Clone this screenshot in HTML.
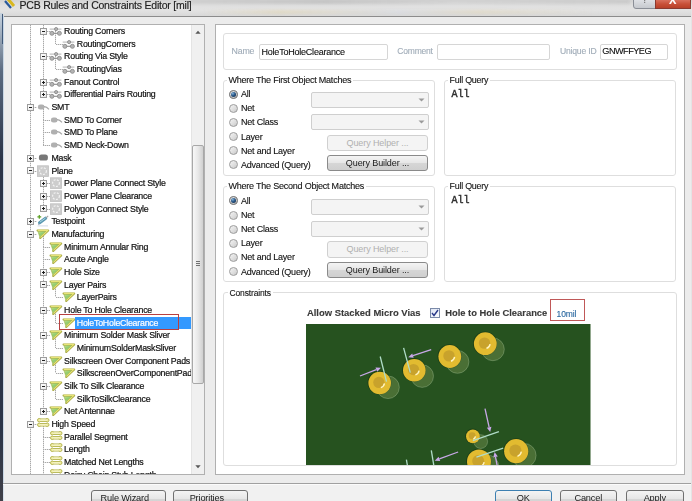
<!DOCTYPE html><html><head><meta charset="utf-8"><style>
*{margin:0;padding:0;box-sizing:border-box}
html,body{width:692px;height:501px;overflow:hidden;background:#ececec}
body{position:relative;font-family:"Liberation Sans",sans-serif;color:#1e1e1e}
#w{position:absolute;left:0;top:0;width:692px;height:501px;filter:blur(0.6px)}
.ab{position:absolute}
.t{position:absolute;white-space:nowrap;line-height:12px;height:12px;-webkit-text-stroke:0.12px currentColor}
.tr{position:absolute;white-space:nowrap;letter-spacing:-0.22px;-webkit-text-stroke:0.2px currentColor;font-size:8.8px;line-height:12px;height:12px;color:#202020}
.gb{position:absolute;border:1px solid #dedede;border-radius:3px}
.gl{position:absolute;background:#fff;padding:0 2px 0 2px;white-space:nowrap;line-height:12px;font-size:9px;letter-spacing:-0.22px;color:#151515;-webkit-text-stroke:0.12px currentColor}
.rad{position:absolute;width:9px;height:9px;border-radius:50%;border:1px solid #9c9c9c;background:linear-gradient(135deg,#f4f4f4 0,#dcdcdc 60%,#c8c8c8 100%)}
.inp{position:absolute;background:#fff;border:1px solid #d6d6d6;border-radius:2px}
.dd{position:absolute;background:#f4f4f4;border:1px solid #cfcfcf;border-radius:2px}
.btn{position:absolute;border:1px solid #8a8a8a;border-radius:3px;background:linear-gradient(#f4f4f4,#e6e6e6 50%,#d6d6d6 51%,#cfcfcf);text-align:center;font-size:9px;letter-spacing:-0.2px;line-height:14px;color:#1a1a1a}
</style></head><body><div id="w">
<svg width="0" height="0" style="position:absolute"><defs><linearGradient id="mg" x1="0" y1="0" x2="0.5" y2="1"><stop offset="0" stop-color="#d8e890"/><stop offset="0.5" stop-color="#90cc70"/><stop offset="1" stop-color="#c0dc80"/></linearGradient></defs></svg>
<div class="ab" style="left:0;top:0;width:692px;height:16px;background:linear-gradient(#d4d4d4,#e0e0e0 35%,#e2e2e2 65%,#d8d8d8)"></div>
<div class="ab" style="left:190px;top:0;width:440px;height:4px;background:linear-gradient(90deg,rgba(150,150,150,.15),rgba(120,120,120,.22) 30%,rgba(160,160,160,.1) 60%,rgba(140,140,140,.18));filter:blur(1.5px)"></div>
<div class="ab" style="left:200px;top:10px;width:400px;height:4px;background:linear-gradient(90deg,rgba(230,200,120,.0),rgba(230,200,120,.25) 20%,rgba(200,210,230,.2) 50%,rgba(230,200,120,.2) 70%,rgba(200,200,220,0));filter:blur(1.5px)"></div>
<div class="ab" style="left:0;top:16px;width:692px;height:1px;background:#8c8c8c"></div>
<svg class="ab" style="left:3px;top:0" width="13" height="10" viewBox="0 0 13 10"><path d="M2 1 L8 8" stroke="#2a5a9a" stroke-width="2.2"/><path d="M5 -1 L11 6" stroke="#d8b820" stroke-width="3"/></svg>
<div class="t" style="left:19.5px;top:-1px;font-size:10.5px;letter-spacing:-0.22px;color:#202020;-webkit-text-stroke:0.15px #202020">PCB Rules and Constraints Editor [mil]</div>
<div class="ab" style="left:633px;top:-3px;width:23px;height:11.5px;border:1px solid #8a8e96;border-radius:0 0 0 3px;background:linear-gradient(#e4e6ea,#c6c9ce)"></div>
<div class="ab" style="left:655px;top:-3px;width:36px;height:11.5px;border:1px solid #8a3a30;background:linear-gradient(#e08070,#c85038 60%,#b84028)"></div>
<div class="t" style="left:642px;top:-6px;font-size:10px;color:#777">?</div>
<div class="t" style="left:669px;top:-6px;font-size:11px;color:#fff;font-weight:bold">X</div>
<div class="ab" style="left:0;top:13px;width:3px;height:488px;background:linear-gradient(#c8d4e0,#5a6a80 12%,#2a3448 30%,#2a3448 85%,#404048)"></div>
<div class="ab" style="left:2px;top:14px;width:1px;height:30px;background:#405878"></div>
<div class="ab" style="left:3px;top:16px;width:1px;height:485px;background:#c8d6e4"></div>
<div class="ab" style="left:691px;top:8px;width:1px;height:493px;background:#e4e4e4"></div>
<div class="ab" style="left:11px;top:24px;width:194px;height:451px;border:1px solid #b0b0b0;background:#fff;overflow:hidden">
<div class="ab" style="left:18.0px;top:0.0px;width:1px;height:449.0px;background:repeating-linear-gradient(#a8a8a8 0 1px,#e0e0e0 1px 2px)"></div>
<div class="ab" style="left:62.5px;top:291.6px;width:117.5px;height:12px;background:#3399ff"></div>
<div class="ab" style="left:30.6px;top:0.0px;width:1px;height:6.0px;background:repeating-linear-gradient(#a8a8a8 0 1px,#e0e0e0 1px 2px)"></div>
<div class="ab" style="left:43.2px;top:6.0px;width:1px;height:12.7px;background:repeating-linear-gradient(#a8a8a8 0 1px,#e0e0e0 1px 2px)"></div>
<div class="ab" style="left:30.6px;top:6.0px;width:1px;height:25.4px;background:repeating-linear-gradient(#a8a8a8 0 1px,#e0e0e0 1px 2px)"></div>
<div class="ab" style="left:43.2px;top:31.4px;width:1px;height:12.7px;background:repeating-linear-gradient(#a8a8a8 0 1px,#e0e0e0 1px 2px)"></div>
<div class="ab" style="left:30.6px;top:31.4px;width:1px;height:25.4px;background:repeating-linear-gradient(#a8a8a8 0 1px,#e0e0e0 1px 2px)"></div>
<div class="ab" style="left:30.6px;top:56.7px;width:1px;height:12.7px;background:repeating-linear-gradient(#a8a8a8 0 1px,#e0e0e0 1px 2px)"></div>
<div class="ab" style="left:30.6px;top:82.1px;width:1px;height:12.7px;background:repeating-linear-gradient(#a8a8a8 0 1px,#e0e0e0 1px 2px)"></div>
<div class="ab" style="left:30.6px;top:94.8px;width:1px;height:12.7px;background:repeating-linear-gradient(#a8a8a8 0 1px,#e0e0e0 1px 2px)"></div>
<div class="ab" style="left:30.6px;top:107.4px;width:1px;height:12.7px;background:repeating-linear-gradient(#a8a8a8 0 1px,#e0e0e0 1px 2px)"></div>
<div class="ab" style="left:30.6px;top:145.5px;width:1px;height:12.7px;background:repeating-linear-gradient(#a8a8a8 0 1px,#e0e0e0 1px 2px)"></div>
<div class="ab" style="left:30.6px;top:158.2px;width:1px;height:12.7px;background:repeating-linear-gradient(#a8a8a8 0 1px,#e0e0e0 1px 2px)"></div>
<div class="ab" style="left:30.6px;top:170.8px;width:1px;height:12.7px;background:repeating-linear-gradient(#a8a8a8 0 1px,#e0e0e0 1px 2px)"></div>
<div class="ab" style="left:30.6px;top:208.9px;width:1px;height:12.7px;background:repeating-linear-gradient(#a8a8a8 0 1px,#e0e0e0 1px 2px)"></div>
<div class="ab" style="left:30.6px;top:221.6px;width:1px;height:12.7px;background:repeating-linear-gradient(#a8a8a8 0 1px,#e0e0e0 1px 2px)"></div>
<div class="ab" style="left:30.6px;top:234.2px;width:1px;height:12.7px;background:repeating-linear-gradient(#a8a8a8 0 1px,#e0e0e0 1px 2px)"></div>
<div class="ab" style="left:30.6px;top:246.9px;width:1px;height:12.7px;background:repeating-linear-gradient(#a8a8a8 0 1px,#e0e0e0 1px 2px)"></div>
<div class="ab" style="left:43.2px;top:259.6px;width:1px;height:12.7px;background:repeating-linear-gradient(#a8a8a8 0 1px,#e0e0e0 1px 2px)"></div>
<div class="ab" style="left:30.6px;top:259.6px;width:1px;height:25.4px;background:repeating-linear-gradient(#a8a8a8 0 1px,#e0e0e0 1px 2px)"></div>
<div class="ab" style="left:43.2px;top:285.0px;width:1px;height:12.7px;background:repeating-linear-gradient(#a8a8a8 0 1px,#e0e0e0 1px 2px)"></div>
<div class="ab" style="left:30.6px;top:285.0px;width:1px;height:25.4px;background:repeating-linear-gradient(#a8a8a8 0 1px,#e0e0e0 1px 2px)"></div>
<div class="ab" style="left:43.2px;top:310.3px;width:1px;height:12.7px;background:repeating-linear-gradient(#a8a8a8 0 1px,#e0e0e0 1px 2px)"></div>
<div class="ab" style="left:30.6px;top:310.3px;width:1px;height:25.4px;background:repeating-linear-gradient(#a8a8a8 0 1px,#e0e0e0 1px 2px)"></div>
<div class="ab" style="left:43.2px;top:335.7px;width:1px;height:12.7px;background:repeating-linear-gradient(#a8a8a8 0 1px,#e0e0e0 1px 2px)"></div>
<div class="ab" style="left:30.6px;top:335.7px;width:1px;height:25.4px;background:repeating-linear-gradient(#a8a8a8 0 1px,#e0e0e0 1px 2px)"></div>
<div class="ab" style="left:43.2px;top:361.0px;width:1px;height:12.7px;background:repeating-linear-gradient(#a8a8a8 0 1px,#e0e0e0 1px 2px)"></div>
<div class="ab" style="left:30.6px;top:361.0px;width:1px;height:25.4px;background:repeating-linear-gradient(#a8a8a8 0 1px,#e0e0e0 1px 2px)"></div>
<div class="ab" style="left:30.6px;top:399.1px;width:1px;height:12.7px;background:repeating-linear-gradient(#a8a8a8 0 1px,#e0e0e0 1px 2px)"></div>
<div class="ab" style="left:30.6px;top:411.8px;width:1px;height:12.7px;background:repeating-linear-gradient(#a8a8a8 0 1px,#e0e0e0 1px 2px)"></div>
<div class="ab" style="left:30.6px;top:424.4px;width:1px;height:12.7px;background:repeating-linear-gradient(#a8a8a8 0 1px,#e0e0e0 1px 2px)"></div>
<div class="ab" style="left:30.6px;top:437.1px;width:1px;height:12.7px;background:repeating-linear-gradient(#a8a8a8 0 1px,#e0e0e0 1px 2px)"></div>
<div class="ab" style="left:30.6px;top:449.8px;width:1px;height:-0.8px;background:repeating-linear-gradient(#a8a8a8 0 1px,#e0e0e0 1px 2px)"></div>
<div class="ab" style="left:31.1px;top:6.0px;width:7.0px;height:1px;background:repeating-linear-gradient(90deg,#a8a8a8 0 1px,#e0e0e0 1px 2px)"></div>
<div class="ab" style="left:28px;top:3px;width:7px;height:7px;border:1px solid #9c9c9c;background:linear-gradient(135deg,#fff,#e8e8e8)"></div>
<div class="ab" style="left:30px;top:6px;width:3px;height:1px;background:#202020"></div>
<div class="ab" style="left:38.1px;top:0.0px"><svg style="position:absolute;left:0.0px;top:0.0px;overflow:visible" width="13" height="12" viewBox="0 0 13 12"><g stroke="#8c8c8c" stroke-width="0.9" fill="#b4b4b4"><line x1="-0.3" y1="4.1" x2="11.4" y2="4.1" stroke="#a8a8a8"/><line x1="1.9" y1="8.3" x2="9.4" y2="8.3" stroke-width="1.1"/><circle cx="6.1" cy="4.1" r="1.6"/><circle cx="1.9" cy="8.3" r="2"/><circle cx="9.4" cy="8.3" r="2"/></g></svg></div>
<div class="tr" style="left:52.1px;top:0.0px;color:#111">Routing Corners</div>
<div class="ab" style="left:43.7px;top:18.7px;width:7.1px;height:1px;background:repeating-linear-gradient(90deg,#a8a8a8 0 1px,#e0e0e0 1px 2px)"></div>
<div class="ab" style="left:50.8px;top:12.7px"><svg style="position:absolute;left:0.0px;top:0.0px;overflow:visible" width="13" height="12" viewBox="0 0 13 12"><g stroke="#8c8c8c" stroke-width="0.9" fill="#b4b4b4"><line x1="-0.3" y1="4.1" x2="11.4" y2="4.1" stroke="#a8a8a8"/><line x1="1.9" y1="8.3" x2="9.4" y2="8.3" stroke-width="1.1"/><circle cx="6.1" cy="4.1" r="1.6"/><circle cx="1.9" cy="8.3" r="2"/><circle cx="9.4" cy="8.3" r="2"/></g></svg></div>
<div class="tr" style="left:64.8px;top:12.7px;color:#111">RoutingCorners</div>
<div class="ab" style="left:31.1px;top:31.4px;width:7.0px;height:1px;background:repeating-linear-gradient(90deg,#a8a8a8 0 1px,#e0e0e0 1px 2px)"></div>
<div class="ab" style="left:28px;top:28px;width:7px;height:7px;border:1px solid #9c9c9c;background:linear-gradient(135deg,#fff,#e8e8e8)"></div>
<div class="ab" style="left:30px;top:31px;width:3px;height:1px;background:#202020"></div>
<div class="ab" style="left:38.1px;top:25.4px"><svg style="position:absolute;left:0.0px;top:0.0px;overflow:visible" width="13" height="12" viewBox="0 0 13 12"><g stroke="#8c8c8c" stroke-width="0.9" fill="#b4b4b4"><line x1="-0.3" y1="4.1" x2="11.4" y2="4.1" stroke="#a8a8a8"/><line x1="1.9" y1="8.3" x2="9.4" y2="8.3" stroke-width="1.1"/><circle cx="6.1" cy="4.1" r="1.6"/><circle cx="1.9" cy="8.3" r="2"/><circle cx="9.4" cy="8.3" r="2"/></g></svg></div>
<div class="tr" style="left:52.1px;top:25.4px;color:#111">Routing Via Style</div>
<div class="ab" style="left:43.7px;top:44.0px;width:7.1px;height:1px;background:repeating-linear-gradient(90deg,#a8a8a8 0 1px,#e0e0e0 1px 2px)"></div>
<div class="ab" style="left:50.8px;top:38.0px"><svg style="position:absolute;left:0.0px;top:0.0px;overflow:visible" width="13" height="12" viewBox="0 0 13 12"><g stroke="#8c8c8c" stroke-width="0.9" fill="#b4b4b4"><line x1="-0.3" y1="4.1" x2="11.4" y2="4.1" stroke="#a8a8a8"/><line x1="1.9" y1="8.3" x2="9.4" y2="8.3" stroke-width="1.1"/><circle cx="6.1" cy="4.1" r="1.6"/><circle cx="1.9" cy="8.3" r="2"/><circle cx="9.4" cy="8.3" r="2"/></g></svg></div>
<div class="tr" style="left:64.8px;top:38.0px;color:#111">RoutingVias</div>
<div class="ab" style="left:31.1px;top:56.7px;width:7.0px;height:1px;background:repeating-linear-gradient(90deg,#a8a8a8 0 1px,#e0e0e0 1px 2px)"></div>
<div class="ab" style="left:28px;top:54px;width:7px;height:7px;border:1px solid #9c9c9c;background:linear-gradient(135deg,#fff,#e8e8e8)"></div>
<div class="ab" style="left:30px;top:57px;width:3px;height:1px;background:#202020"></div>
<div class="ab" style="left:31px;top:56px;width:1px;height:3px;background:#202020"></div>
<div class="ab" style="left:38.1px;top:50.7px"><svg style="position:absolute;left:0.0px;top:0.0px;overflow:visible" width="13" height="12" viewBox="0 0 13 12"><g stroke="#8c8c8c" stroke-width="0.9" fill="#b4b4b4"><line x1="-0.3" y1="4.1" x2="11.4" y2="4.1" stroke="#a8a8a8"/><line x1="1.9" y1="8.3" x2="9.4" y2="8.3" stroke-width="1.1"/><circle cx="6.1" cy="4.1" r="1.6"/><circle cx="1.9" cy="8.3" r="2"/><circle cx="9.4" cy="8.3" r="2"/></g></svg></div>
<div class="tr" style="left:52.1px;top:50.7px;color:#111">Fanout Control</div>
<div class="ab" style="left:31.1px;top:69.4px;width:7.0px;height:1px;background:repeating-linear-gradient(90deg,#a8a8a8 0 1px,#e0e0e0 1px 2px)"></div>
<div class="ab" style="left:28px;top:66px;width:7px;height:7px;border:1px solid #9c9c9c;background:linear-gradient(135deg,#fff,#e8e8e8)"></div>
<div class="ab" style="left:30px;top:69px;width:3px;height:1px;background:#202020"></div>
<div class="ab" style="left:31px;top:68px;width:1px;height:3px;background:#202020"></div>
<div class="ab" style="left:38.1px;top:63.4px"><svg style="position:absolute;left:0.0px;top:0.0px;overflow:visible" width="13" height="12" viewBox="0 0 13 12"><g stroke="#8c8c8c" stroke-width="0.9" fill="#b4b4b4"><line x1="-0.3" y1="4.1" x2="11.4" y2="4.1" stroke="#a8a8a8"/><line x1="1.9" y1="8.3" x2="9.4" y2="8.3" stroke-width="1.1"/><circle cx="6.1" cy="4.1" r="1.6"/><circle cx="1.9" cy="8.3" r="2"/><circle cx="9.4" cy="8.3" r="2"/></g></svg></div>
<div class="tr" style="left:52.1px;top:63.4px;color:#111">Differential Pairs Routing</div>
<div class="ab" style="left:18.5px;top:82.1px;width:6.9px;height:1px;background:repeating-linear-gradient(90deg,#a8a8a8 0 1px,#e0e0e0 1px 2px)"></div>
<div class="ab" style="left:15px;top:79px;width:7px;height:7px;border:1px solid #9c9c9c;background:linear-gradient(135deg,#fff,#e8e8e8)"></div>
<div class="ab" style="left:17px;top:82px;width:3px;height:1px;background:#202020"></div>
<div class="ab" style="left:25.4px;top:76.1px"><svg style="position:absolute;left:0.0px;top:0.0px;overflow:visible" width="13" height="12" viewBox="0 0 13 12"><rect x="0.9" y="3.6" width="6.6" height="5" rx="2.4" fill="#b0b0b0"/><path d="M7 5.6 Q9.5 5.3 12 8.3" stroke="#a8a8a8" stroke-width="1.2" fill="none"/></svg></div>
<div class="tr" style="left:39.4px;top:76.1px;color:#111">SMT</div>
<div class="ab" style="left:31.1px;top:94.8px;width:7.0px;height:1px;background:repeating-linear-gradient(90deg,#a8a8a8 0 1px,#e0e0e0 1px 2px)"></div>
<div class="ab" style="left:38.1px;top:88.8px"><svg style="position:absolute;left:0.0px;top:0.0px;overflow:visible" width="13" height="12" viewBox="0 0 13 12"><rect x="0.9" y="3.6" width="6.6" height="5" rx="2.4" fill="#b0b0b0"/><path d="M7 5.6 Q9.5 5.3 12 8.3" stroke="#a8a8a8" stroke-width="1.2" fill="none"/></svg></div>
<div class="tr" style="left:52.1px;top:88.8px;color:#111">SMD To Corner</div>
<div class="ab" style="left:31.1px;top:107.4px;width:7.0px;height:1px;background:repeating-linear-gradient(90deg,#a8a8a8 0 1px,#e0e0e0 1px 2px)"></div>
<div class="ab" style="left:38.1px;top:101.4px"><svg style="position:absolute;left:0.0px;top:0.0px;overflow:visible" width="13" height="12" viewBox="0 0 13 12"><rect x="0.9" y="3.6" width="6.6" height="5" rx="2.4" fill="#b0b0b0"/><path d="M7 5.6 Q9.5 5.3 12 8.3" stroke="#a8a8a8" stroke-width="1.2" fill="none"/></svg></div>
<div class="tr" style="left:52.1px;top:101.4px;color:#111">SMD To Plane</div>
<div class="ab" style="left:31.1px;top:120.1px;width:7.0px;height:1px;background:repeating-linear-gradient(90deg,#a8a8a8 0 1px,#e0e0e0 1px 2px)"></div>
<div class="ab" style="left:38.1px;top:114.1px"><svg style="position:absolute;left:0.0px;top:0.0px;overflow:visible" width="13" height="12" viewBox="0 0 13 12"><rect x="0.9" y="3.6" width="6.6" height="5" rx="2.4" fill="#b0b0b0"/><path d="M7 5.6 Q9.5 5.3 12 8.3" stroke="#a8a8a8" stroke-width="1.2" fill="none"/></svg></div>
<div class="tr" style="left:52.1px;top:114.1px;color:#111">SMD Neck-Down</div>
<div class="ab" style="left:18.5px;top:132.8px;width:6.9px;height:1px;background:repeating-linear-gradient(90deg,#a8a8a8 0 1px,#e0e0e0 1px 2px)"></div>
<div class="ab" style="left:15px;top:130px;width:7px;height:7px;border:1px solid #9c9c9c;background:linear-gradient(135deg,#fff,#e8e8e8)"></div>
<div class="ab" style="left:17px;top:133px;width:3px;height:1px;background:#202020"></div>
<div class="ab" style="left:18px;top:132px;width:1px;height:3px;background:#202020"></div>
<div class="ab" style="left:25.4px;top:126.8px"><svg style="position:absolute;left:0.0px;top:0.0px;overflow:visible" width="13" height="12" viewBox="0 0 13 12"><rect x="1.9" y="2.6" width="9" height="6" rx="2.6" fill="#777777"/></svg></div>
<div class="tr" style="left:39.4px;top:126.8px;color:#111">Mask</div>
<div class="ab" style="left:18.5px;top:145.5px;width:6.9px;height:1px;background:repeating-linear-gradient(90deg,#a8a8a8 0 1px,#e0e0e0 1px 2px)"></div>
<div class="ab" style="left:15px;top:142px;width:7px;height:7px;border:1px solid #9c9c9c;background:linear-gradient(135deg,#fff,#e8e8e8)"></div>
<div class="ab" style="left:17px;top:145px;width:3px;height:1px;background:#202020"></div>
<div class="ab" style="left:25.4px;top:139.5px"><svg style="position:absolute;left:0.0px;top:0.0px;overflow:visible" width="13" height="12" viewBox="0 0 13 12"><rect x="0.5" y="0.8" width="11" height="10.6" fill="#cdcdcd" stroke="#c0c0c0" stroke-width="0.8"/><circle cx="6" cy="6.1" r="3.4" fill="none" stroke="#f2f2f2" stroke-width="1.2" stroke-dasharray="2 1.3"/></svg></div>
<div class="tr" style="left:39.4px;top:139.5px;color:#111">Plane</div>
<div class="ab" style="left:31.1px;top:158.2px;width:7.0px;height:1px;background:repeating-linear-gradient(90deg,#a8a8a8 0 1px,#e0e0e0 1px 2px)"></div>
<div class="ab" style="left:28px;top:155px;width:7px;height:7px;border:1px solid #9c9c9c;background:linear-gradient(135deg,#fff,#e8e8e8)"></div>
<div class="ab" style="left:30px;top:158px;width:3px;height:1px;background:#202020"></div>
<div class="ab" style="left:31px;top:157px;width:1px;height:3px;background:#202020"></div>
<div class="ab" style="left:38.1px;top:152.2px"><svg style="position:absolute;left:0.0px;top:0.0px;overflow:visible" width="13" height="12" viewBox="0 0 13 12"><rect x="0.5" y="0.8" width="11" height="10.6" fill="#cdcdcd" stroke="#c0c0c0" stroke-width="0.8"/><circle cx="6" cy="6.1" r="3.4" fill="none" stroke="#f2f2f2" stroke-width="1.2" stroke-dasharray="2 1.3"/></svg></div>
<div class="tr" style="left:52.1px;top:152.2px;color:#111">Power Plane Connect Style</div>
<div class="ab" style="left:31.1px;top:170.8px;width:7.0px;height:1px;background:repeating-linear-gradient(90deg,#a8a8a8 0 1px,#e0e0e0 1px 2px)"></div>
<div class="ab" style="left:28px;top:168px;width:7px;height:7px;border:1px solid #9c9c9c;background:linear-gradient(135deg,#fff,#e8e8e8)"></div>
<div class="ab" style="left:30px;top:171px;width:3px;height:1px;background:#202020"></div>
<div class="ab" style="left:31px;top:170px;width:1px;height:3px;background:#202020"></div>
<div class="ab" style="left:38.1px;top:164.8px"><svg style="position:absolute;left:0.0px;top:0.0px;overflow:visible" width="13" height="12" viewBox="0 0 13 12"><rect x="0.5" y="0.8" width="11" height="10.6" fill="#cdcdcd" stroke="#c0c0c0" stroke-width="0.8"/><circle cx="6" cy="6.1" r="3.4" fill="none" stroke="#f2f2f2" stroke-width="1.2" stroke-dasharray="2 1.3"/></svg></div>
<div class="tr" style="left:52.1px;top:164.8px;color:#111">Power Plane Clearance</div>
<div class="ab" style="left:31.1px;top:183.5px;width:7.0px;height:1px;background:repeating-linear-gradient(90deg,#a8a8a8 0 1px,#e0e0e0 1px 2px)"></div>
<div class="ab" style="left:28px;top:180px;width:7px;height:7px;border:1px solid #9c9c9c;background:linear-gradient(135deg,#fff,#e8e8e8)"></div>
<div class="ab" style="left:30px;top:183px;width:3px;height:1px;background:#202020"></div>
<div class="ab" style="left:31px;top:182px;width:1px;height:3px;background:#202020"></div>
<div class="ab" style="left:38.1px;top:177.5px"><svg style="position:absolute;left:0.0px;top:0.0px;overflow:visible" width="13" height="12" viewBox="0 0 13 12"><rect x="0.5" y="0.8" width="11" height="10.6" fill="#cdcdcd" stroke="#c0c0c0" stroke-width="0.8"/><circle cx="6" cy="6.1" r="3.4" fill="none" stroke="#f2f2f2" stroke-width="1.2" stroke-dasharray="2 1.3"/></svg></div>
<div class="tr" style="left:52.1px;top:177.5px;color:#111">Polygon Connect Style</div>
<div class="ab" style="left:18.5px;top:196.2px;width:6.9px;height:1px;background:repeating-linear-gradient(90deg,#a8a8a8 0 1px,#e0e0e0 1px 2px)"></div>
<div class="ab" style="left:15px;top:193px;width:7px;height:7px;border:1px solid #9c9c9c;background:linear-gradient(135deg,#fff,#e8e8e8)"></div>
<div class="ab" style="left:17px;top:196px;width:3px;height:1px;background:#202020"></div>
<div class="ab" style="left:18px;top:195px;width:1px;height:3px;background:#202020"></div>
<div class="ab" style="left:25.4px;top:190.2px"><svg style="position:absolute;left:0.0px;top:0.0px;overflow:visible" width="13" height="12" viewBox="0 0 13 12"><path d="M2.6 7.7 L8.6 3.3" stroke="#5a98b0" stroke-width="3.2" stroke-linecap="round"/><path d="M3.2 6.9 L8.2 3.3" stroke="#b0dcea" stroke-width="0.9" stroke-linecap="round"/><path d="M9.2 2.8 L11.2 0.9" stroke="#a0a0a0" stroke-width="1.1"/><path d="M0.4 1.9 H4.2 M2.3 0 V3.8" stroke="#5aa020" stroke-width="1.2"/><path d="M1.2 9.6 L2.4 8.6" stroke="#8088a8" stroke-width="0.8"/><path d="M0.6 10.9 H11" stroke="#c8d0e0" stroke-width="0.8"/></svg></div>
<div class="tr" style="left:39.4px;top:190.2px;color:#111">Testpoint</div>
<div class="ab" style="left:18.5px;top:208.9px;width:6.9px;height:1px;background:repeating-linear-gradient(90deg,#a8a8a8 0 1px,#e0e0e0 1px 2px)"></div>
<div class="ab" style="left:15px;top:206px;width:7px;height:7px;border:1px solid #9c9c9c;background:linear-gradient(135deg,#fff,#e8e8e8)"></div>
<div class="ab" style="left:17px;top:209px;width:3px;height:1px;background:#202020"></div>
<div class="ab" style="left:25.4px;top:202.9px"><svg style="position:absolute;left:0.0px;top:0.0px;overflow:visible" width="13" height="12" viewBox="0 0 13 12"><path d="M0.6 2.2 H11.4 L3.2 10.2 Z" fill="url(#mg)"/><path d="M0.5 2.4 H11.2 L3.2 10" fill="none" stroke="#a8a840" stroke-width="2" stroke-linejoin="round" stroke-linecap="round"/><path d="M0.7 2.4 H10.8 L3.3 9.6" fill="none" stroke="#e8e478" stroke-width="1.1" stroke-linejoin="round"/><path d="M0.7 2.6 L3.2 10" fill="none" stroke="#a0b850" stroke-width="0.7"/></svg></div>
<div class="tr" style="left:39.4px;top:202.9px;color:#111">Manufacturing</div>
<div class="ab" style="left:31.1px;top:221.6px;width:7.0px;height:1px;background:repeating-linear-gradient(90deg,#a8a8a8 0 1px,#e0e0e0 1px 2px)"></div>
<div class="ab" style="left:38.1px;top:215.6px"><svg style="position:absolute;left:0.0px;top:0.0px;overflow:visible" width="13" height="12" viewBox="0 0 13 12"><path d="M0.6 2.2 H11.4 L3.2 10.2 Z" fill="url(#mg)"/><path d="M0.5 2.4 H11.2 L3.2 10" fill="none" stroke="#a8a840" stroke-width="2" stroke-linejoin="round" stroke-linecap="round"/><path d="M0.7 2.4 H10.8 L3.3 9.6" fill="none" stroke="#e8e478" stroke-width="1.1" stroke-linejoin="round"/><path d="M0.7 2.6 L3.2 10" fill="none" stroke="#a0b850" stroke-width="0.7"/></svg></div>
<div class="tr" style="left:52.1px;top:215.6px;color:#111">Minimum Annular Ring</div>
<div class="ab" style="left:31.1px;top:234.2px;width:7.0px;height:1px;background:repeating-linear-gradient(90deg,#a8a8a8 0 1px,#e0e0e0 1px 2px)"></div>
<div class="ab" style="left:38.1px;top:228.2px"><svg style="position:absolute;left:0.0px;top:0.0px;overflow:visible" width="13" height="12" viewBox="0 0 13 12"><path d="M0.6 2.2 H11.4 L3.2 10.2 Z" fill="url(#mg)"/><path d="M0.5 2.4 H11.2 L3.2 10" fill="none" stroke="#a8a840" stroke-width="2" stroke-linejoin="round" stroke-linecap="round"/><path d="M0.7 2.4 H10.8 L3.3 9.6" fill="none" stroke="#e8e478" stroke-width="1.1" stroke-linejoin="round"/><path d="M0.7 2.6 L3.2 10" fill="none" stroke="#a0b850" stroke-width="0.7"/></svg></div>
<div class="tr" style="left:52.1px;top:228.2px;color:#111">Acute Angle</div>
<div class="ab" style="left:31.1px;top:246.9px;width:7.0px;height:1px;background:repeating-linear-gradient(90deg,#a8a8a8 0 1px,#e0e0e0 1px 2px)"></div>
<div class="ab" style="left:28px;top:244px;width:7px;height:7px;border:1px solid #9c9c9c;background:linear-gradient(135deg,#fff,#e8e8e8)"></div>
<div class="ab" style="left:30px;top:247px;width:3px;height:1px;background:#202020"></div>
<div class="ab" style="left:31px;top:246px;width:1px;height:3px;background:#202020"></div>
<div class="ab" style="left:38.1px;top:240.9px"><svg style="position:absolute;left:0.0px;top:0.0px;overflow:visible" width="13" height="12" viewBox="0 0 13 12"><path d="M0.6 2.2 H11.4 L3.2 10.2 Z" fill="url(#mg)"/><path d="M0.5 2.4 H11.2 L3.2 10" fill="none" stroke="#a8a840" stroke-width="2" stroke-linejoin="round" stroke-linecap="round"/><path d="M0.7 2.4 H10.8 L3.3 9.6" fill="none" stroke="#e8e478" stroke-width="1.1" stroke-linejoin="round"/><path d="M0.7 2.6 L3.2 10" fill="none" stroke="#a0b850" stroke-width="0.7"/></svg></div>
<div class="tr" style="left:52.1px;top:240.9px;color:#111">Hole Size</div>
<div class="ab" style="left:31.1px;top:259.6px;width:7.0px;height:1px;background:repeating-linear-gradient(90deg,#a8a8a8 0 1px,#e0e0e0 1px 2px)"></div>
<div class="ab" style="left:28px;top:256px;width:7px;height:7px;border:1px solid #9c9c9c;background:linear-gradient(135deg,#fff,#e8e8e8)"></div>
<div class="ab" style="left:30px;top:259px;width:3px;height:1px;background:#202020"></div>
<div class="ab" style="left:38.1px;top:253.6px"><svg style="position:absolute;left:0.0px;top:0.0px;overflow:visible" width="13" height="12" viewBox="0 0 13 12"><path d="M0.6 2.2 H11.4 L3.2 10.2 Z" fill="url(#mg)"/><path d="M0.5 2.4 H11.2 L3.2 10" fill="none" stroke="#a8a840" stroke-width="2" stroke-linejoin="round" stroke-linecap="round"/><path d="M0.7 2.4 H10.8 L3.3 9.6" fill="none" stroke="#e8e478" stroke-width="1.1" stroke-linejoin="round"/><path d="M0.7 2.6 L3.2 10" fill="none" stroke="#a0b850" stroke-width="0.7"/></svg></div>
<div class="tr" style="left:52.1px;top:253.6px;color:#111">Layer Pairs</div>
<div class="ab" style="left:43.7px;top:272.3px;width:7.1px;height:1px;background:repeating-linear-gradient(90deg,#a8a8a8 0 1px,#e0e0e0 1px 2px)"></div>
<div class="ab" style="left:50.8px;top:266.3px"><svg style="position:absolute;left:0.0px;top:0.0px;overflow:visible" width="13" height="12" viewBox="0 0 13 12"><path d="M0.6 2.2 H11.4 L3.2 10.2 Z" fill="url(#mg)"/><path d="M0.5 2.4 H11.2 L3.2 10" fill="none" stroke="#a8a840" stroke-width="2" stroke-linejoin="round" stroke-linecap="round"/><path d="M0.7 2.4 H10.8 L3.3 9.6" fill="none" stroke="#e8e478" stroke-width="1.1" stroke-linejoin="round"/><path d="M0.7 2.6 L3.2 10" fill="none" stroke="#a0b850" stroke-width="0.7"/></svg></div>
<div class="tr" style="left:64.8px;top:266.3px;color:#111">LayerPairs</div>
<div class="ab" style="left:31.1px;top:285.0px;width:7.0px;height:1px;background:repeating-linear-gradient(90deg,#a8a8a8 0 1px,#e0e0e0 1px 2px)"></div>
<div class="ab" style="left:28px;top:282px;width:7px;height:7px;border:1px solid #9c9c9c;background:linear-gradient(135deg,#fff,#e8e8e8)"></div>
<div class="ab" style="left:30px;top:285px;width:3px;height:1px;background:#202020"></div>
<div class="ab" style="left:38.1px;top:279.0px"><svg style="position:absolute;left:0.0px;top:0.0px;overflow:visible" width="13" height="12" viewBox="0 0 13 12"><path d="M0.6 2.2 H11.4 L3.2 10.2 Z" fill="url(#mg)"/><path d="M0.5 2.4 H11.2 L3.2 10" fill="none" stroke="#a8a840" stroke-width="2" stroke-linejoin="round" stroke-linecap="round"/><path d="M0.7 2.4 H10.8 L3.3 9.6" fill="none" stroke="#e8e478" stroke-width="1.1" stroke-linejoin="round"/><path d="M0.7 2.6 L3.2 10" fill="none" stroke="#a0b850" stroke-width="0.7"/></svg></div>
<div class="tr" style="left:52.1px;top:279.0px;color:#111">Hole To Hole Clearance</div>
<div class="ab" style="left:43.7px;top:297.6px;width:7.1px;height:1px;background:repeating-linear-gradient(90deg,#a8a8a8 0 1px,#e0e0e0 1px 2px)"></div>
<div class="ab" style="left:50.8px;top:291.6px"><svg style="position:absolute;left:0.0px;top:0.0px;overflow:visible" width="13" height="12" viewBox="0 0 13 12"><path d="M0.6 2.2 H11.4 L3.2 10.2 Z" fill="url(#mg)"/><path d="M0.5 2.4 H11.2 L3.2 10" fill="none" stroke="#a8a840" stroke-width="2" stroke-linejoin="round" stroke-linecap="round"/><path d="M0.7 2.4 H10.8 L3.3 9.6" fill="none" stroke="#e8e478" stroke-width="1.1" stroke-linejoin="round"/><path d="M0.7 2.6 L3.2 10" fill="none" stroke="#a0b850" stroke-width="0.7"/></svg></div>
<div class="tr" style="left:64.8px;top:291.6px;color:#fff">HoleToHoleClearance</div>
<div class="ab" style="left:31.1px;top:310.3px;width:7.0px;height:1px;background:repeating-linear-gradient(90deg,#a8a8a8 0 1px,#e0e0e0 1px 2px)"></div>
<div class="ab" style="left:28px;top:307px;width:7px;height:7px;border:1px solid #9c9c9c;background:linear-gradient(135deg,#fff,#e8e8e8)"></div>
<div class="ab" style="left:30px;top:310px;width:3px;height:1px;background:#202020"></div>
<div class="ab" style="left:38.1px;top:304.3px"><svg style="position:absolute;left:0.0px;top:0.0px;overflow:visible" width="13" height="12" viewBox="0 0 13 12"><path d="M0.6 2.2 H11.4 L3.2 10.2 Z" fill="url(#mg)"/><path d="M0.5 2.4 H11.2 L3.2 10" fill="none" stroke="#a8a840" stroke-width="2" stroke-linejoin="round" stroke-linecap="round"/><path d="M0.7 2.4 H10.8 L3.3 9.6" fill="none" stroke="#e8e478" stroke-width="1.1" stroke-linejoin="round"/><path d="M0.7 2.6 L3.2 10" fill="none" stroke="#a0b850" stroke-width="0.7"/></svg></div>
<div class="tr" style="left:52.1px;top:304.3px;color:#111">Minimum Solder Mask Sliver</div>
<div class="ab" style="left:43.7px;top:323.0px;width:7.1px;height:1px;background:repeating-linear-gradient(90deg,#a8a8a8 0 1px,#e0e0e0 1px 2px)"></div>
<div class="ab" style="left:50.8px;top:317.0px"><svg style="position:absolute;left:0.0px;top:0.0px;overflow:visible" width="13" height="12" viewBox="0 0 13 12"><path d="M0.6 2.2 H11.4 L3.2 10.2 Z" fill="url(#mg)"/><path d="M0.5 2.4 H11.2 L3.2 10" fill="none" stroke="#a8a840" stroke-width="2" stroke-linejoin="round" stroke-linecap="round"/><path d="M0.7 2.4 H10.8 L3.3 9.6" fill="none" stroke="#e8e478" stroke-width="1.1" stroke-linejoin="round"/><path d="M0.7 2.6 L3.2 10" fill="none" stroke="#a0b850" stroke-width="0.7"/></svg></div>
<div class="tr" style="left:64.8px;top:317.0px;color:#111">MinimumSolderMaskSliver</div>
<div class="ab" style="left:31.1px;top:335.7px;width:7.0px;height:1px;background:repeating-linear-gradient(90deg,#a8a8a8 0 1px,#e0e0e0 1px 2px)"></div>
<div class="ab" style="left:28px;top:332px;width:7px;height:7px;border:1px solid #9c9c9c;background:linear-gradient(135deg,#fff,#e8e8e8)"></div>
<div class="ab" style="left:30px;top:335px;width:3px;height:1px;background:#202020"></div>
<div class="ab" style="left:38.1px;top:329.7px"><svg style="position:absolute;left:0.0px;top:0.0px;overflow:visible" width="13" height="12" viewBox="0 0 13 12"><path d="M0.6 2.2 H11.4 L3.2 10.2 Z" fill="url(#mg)"/><path d="M0.5 2.4 H11.2 L3.2 10" fill="none" stroke="#a8a840" stroke-width="2" stroke-linejoin="round" stroke-linecap="round"/><path d="M0.7 2.4 H10.8 L3.3 9.6" fill="none" stroke="#e8e478" stroke-width="1.1" stroke-linejoin="round"/><path d="M0.7 2.6 L3.2 10" fill="none" stroke="#a0b850" stroke-width="0.7"/></svg></div>
<div class="tr" style="left:52.1px;top:329.7px;color:#111">Silkscreen Over Component Pads</div>
<div class="ab" style="left:43.7px;top:348.4px;width:7.1px;height:1px;background:repeating-linear-gradient(90deg,#a8a8a8 0 1px,#e0e0e0 1px 2px)"></div>
<div class="ab" style="left:50.8px;top:342.4px"><svg style="position:absolute;left:0.0px;top:0.0px;overflow:visible" width="13" height="12" viewBox="0 0 13 12"><path d="M0.6 2.2 H11.4 L3.2 10.2 Z" fill="url(#mg)"/><path d="M0.5 2.4 H11.2 L3.2 10" fill="none" stroke="#a8a840" stroke-width="2" stroke-linejoin="round" stroke-linecap="round"/><path d="M0.7 2.4 H10.8 L3.3 9.6" fill="none" stroke="#e8e478" stroke-width="1.1" stroke-linejoin="round"/><path d="M0.7 2.6 L3.2 10" fill="none" stroke="#a0b850" stroke-width="0.7"/></svg></div>
<div class="tr" style="left:64.8px;top:342.4px;color:#111">SilkscreenOverComponentPads</div>
<div class="ab" style="left:31.1px;top:361.0px;width:7.0px;height:1px;background:repeating-linear-gradient(90deg,#a8a8a8 0 1px,#e0e0e0 1px 2px)"></div>
<div class="ab" style="left:28px;top:358px;width:7px;height:7px;border:1px solid #9c9c9c;background:linear-gradient(135deg,#fff,#e8e8e8)"></div>
<div class="ab" style="left:30px;top:361px;width:3px;height:1px;background:#202020"></div>
<div class="ab" style="left:38.1px;top:355.0px"><svg style="position:absolute;left:0.0px;top:0.0px;overflow:visible" width="13" height="12" viewBox="0 0 13 12"><path d="M0.6 2.2 H11.4 L3.2 10.2 Z" fill="url(#mg)"/><path d="M0.5 2.4 H11.2 L3.2 10" fill="none" stroke="#a8a840" stroke-width="2" stroke-linejoin="round" stroke-linecap="round"/><path d="M0.7 2.4 H10.8 L3.3 9.6" fill="none" stroke="#e8e478" stroke-width="1.1" stroke-linejoin="round"/><path d="M0.7 2.6 L3.2 10" fill="none" stroke="#a0b850" stroke-width="0.7"/></svg></div>
<div class="tr" style="left:52.1px;top:355.0px;color:#111">Silk To Silk Clearance</div>
<div class="ab" style="left:43.7px;top:373.7px;width:7.1px;height:1px;background:repeating-linear-gradient(90deg,#a8a8a8 0 1px,#e0e0e0 1px 2px)"></div>
<div class="ab" style="left:50.8px;top:367.7px"><svg style="position:absolute;left:0.0px;top:0.0px;overflow:visible" width="13" height="12" viewBox="0 0 13 12"><path d="M0.6 2.2 H11.4 L3.2 10.2 Z" fill="url(#mg)"/><path d="M0.5 2.4 H11.2 L3.2 10" fill="none" stroke="#a8a840" stroke-width="2" stroke-linejoin="round" stroke-linecap="round"/><path d="M0.7 2.4 H10.8 L3.3 9.6" fill="none" stroke="#e8e478" stroke-width="1.1" stroke-linejoin="round"/><path d="M0.7 2.6 L3.2 10" fill="none" stroke="#a0b850" stroke-width="0.7"/></svg></div>
<div class="tr" style="left:64.8px;top:367.7px;color:#111">SilkToSilkClearance</div>
<div class="ab" style="left:31.1px;top:386.4px;width:7.0px;height:1px;background:repeating-linear-gradient(90deg,#a8a8a8 0 1px,#e0e0e0 1px 2px)"></div>
<div class="ab" style="left:28px;top:383px;width:7px;height:7px;border:1px solid #9c9c9c;background:linear-gradient(135deg,#fff,#e8e8e8)"></div>
<div class="ab" style="left:30px;top:386px;width:3px;height:1px;background:#202020"></div>
<div class="ab" style="left:31px;top:385px;width:1px;height:3px;background:#202020"></div>
<div class="ab" style="left:38.1px;top:380.4px"><svg style="position:absolute;left:0.0px;top:0.0px;overflow:visible" width="13" height="12" viewBox="0 0 13 12"><path d="M0.6 2.2 H11.4 L3.2 10.2 Z" fill="url(#mg)"/><path d="M0.5 2.4 H11.2 L3.2 10" fill="none" stroke="#a8a840" stroke-width="2" stroke-linejoin="round" stroke-linecap="round"/><path d="M0.7 2.4 H10.8 L3.3 9.6" fill="none" stroke="#e8e478" stroke-width="1.1" stroke-linejoin="round"/><path d="M0.7 2.6 L3.2 10" fill="none" stroke="#a0b850" stroke-width="0.7"/></svg></div>
<div class="tr" style="left:52.1px;top:380.4px;color:#111">Net Antennae</div>
<div class="ab" style="left:18.5px;top:399.1px;width:6.9px;height:1px;background:repeating-linear-gradient(90deg,#a8a8a8 0 1px,#e0e0e0 1px 2px)"></div>
<div class="ab" style="left:15px;top:396px;width:7px;height:7px;border:1px solid #9c9c9c;background:linear-gradient(135deg,#fff,#e8e8e8)"></div>
<div class="ab" style="left:17px;top:399px;width:3px;height:1px;background:#202020"></div>
<div class="ab" style="left:25.4px;top:393.1px"><svg style="position:absolute;left:0.0px;top:0.0px;overflow:visible" width="13" height="12" viewBox="0 0 13 12"><g fill="#eeeaa0" stroke="#b4b450" stroke-width="0.9"><rect x="1" y="0.9000000000000001" width="10.5" height="2.6" rx="1.3"/><circle cx="2.2" cy="2.2" r="1.7"/><circle cx="10.3" cy="2.2" r="1.7"/></g><rect x="2.5" y="1.4000000000000001" width="7.5" height="1.6" fill="#f4f2c0"/><g fill="#eeeaa0" stroke="#b4b450" stroke-width="0.9"><rect x="1" y="5.5" width="10.5" height="2.6" rx="1.3"/><circle cx="2.2" cy="6.8" r="1.7"/><circle cx="10.3" cy="6.8" r="1.7"/></g><rect x="2.5" y="6.0" width="7.5" height="1.6" fill="#f4f2c0"/></svg></div>
<div class="tr" style="left:39.4px;top:393.1px;color:#111">High Speed</div>
<div class="ab" style="left:31.1px;top:411.8px;width:7.0px;height:1px;background:repeating-linear-gradient(90deg,#a8a8a8 0 1px,#e0e0e0 1px 2px)"></div>
<div class="ab" style="left:38.1px;top:405.8px"><svg style="position:absolute;left:0.0px;top:0.0px;overflow:visible" width="13" height="12" viewBox="0 0 13 12"><g fill="#eeeaa0" stroke="#b4b450" stroke-width="0.9"><rect x="1" y="0.9000000000000001" width="10.5" height="2.6" rx="1.3"/><circle cx="2.2" cy="2.2" r="1.7"/><circle cx="10.3" cy="2.2" r="1.7"/></g><rect x="2.5" y="1.4000000000000001" width="7.5" height="1.6" fill="#f4f2c0"/><g fill="#eeeaa0" stroke="#b4b450" stroke-width="0.9"><rect x="1" y="5.5" width="10.5" height="2.6" rx="1.3"/><circle cx="2.2" cy="6.8" r="1.7"/><circle cx="10.3" cy="6.8" r="1.7"/></g><rect x="2.5" y="6.0" width="7.5" height="1.6" fill="#f4f2c0"/></svg></div>
<div class="tr" style="left:52.1px;top:405.8px;color:#111">Parallel Segment</div>
<div class="ab" style="left:31.1px;top:424.4px;width:7.0px;height:1px;background:repeating-linear-gradient(90deg,#a8a8a8 0 1px,#e0e0e0 1px 2px)"></div>
<div class="ab" style="left:38.1px;top:418.4px"><svg style="position:absolute;left:0.0px;top:0.0px;overflow:visible" width="13" height="12" viewBox="0 0 13 12"><g fill="#eeeaa0" stroke="#b4b450" stroke-width="0.9"><rect x="1" y="0.9000000000000001" width="10.5" height="2.6" rx="1.3"/><circle cx="2.2" cy="2.2" r="1.7"/><circle cx="10.3" cy="2.2" r="1.7"/></g><rect x="2.5" y="1.4000000000000001" width="7.5" height="1.6" fill="#f4f2c0"/><g fill="#eeeaa0" stroke="#b4b450" stroke-width="0.9"><rect x="1" y="5.5" width="10.5" height="2.6" rx="1.3"/><circle cx="2.2" cy="6.8" r="1.7"/><circle cx="10.3" cy="6.8" r="1.7"/></g><rect x="2.5" y="6.0" width="7.5" height="1.6" fill="#f4f2c0"/></svg></div>
<div class="tr" style="left:52.1px;top:418.4px;color:#111">Length</div>
<div class="ab" style="left:31.1px;top:437.1px;width:7.0px;height:1px;background:repeating-linear-gradient(90deg,#a8a8a8 0 1px,#e0e0e0 1px 2px)"></div>
<div class="ab" style="left:38.1px;top:431.1px"><svg style="position:absolute;left:0.0px;top:0.0px;overflow:visible" width="13" height="12" viewBox="0 0 13 12"><g fill="#eeeaa0" stroke="#b4b450" stroke-width="0.9"><rect x="1" y="0.9000000000000001" width="10.5" height="2.6" rx="1.3"/><circle cx="2.2" cy="2.2" r="1.7"/><circle cx="10.3" cy="2.2" r="1.7"/></g><rect x="2.5" y="1.4000000000000001" width="7.5" height="1.6" fill="#f4f2c0"/><g fill="#eeeaa0" stroke="#b4b450" stroke-width="0.9"><rect x="1" y="5.5" width="10.5" height="2.6" rx="1.3"/><circle cx="2.2" cy="6.8" r="1.7"/><circle cx="10.3" cy="6.8" r="1.7"/></g><rect x="2.5" y="6.0" width="7.5" height="1.6" fill="#f4f2c0"/></svg></div>
<div class="tr" style="left:52.1px;top:431.1px;color:#111">Matched Net Lengths</div>
<div class="ab" style="left:31.1px;top:449.8px;width:7.0px;height:1px;background:repeating-linear-gradient(90deg,#a8a8a8 0 1px,#e0e0e0 1px 2px)"></div>
<div class="ab" style="left:38.1px;top:443.8px"><svg style="position:absolute;left:0.0px;top:0.0px;overflow:visible" width="13" height="12" viewBox="0 0 13 12"><g fill="#eeeaa0" stroke="#b4b450" stroke-width="0.9"><rect x="1" y="0.9000000000000001" width="10.5" height="2.6" rx="1.3"/><circle cx="2.2" cy="2.2" r="1.7"/><circle cx="10.3" cy="2.2" r="1.7"/></g><rect x="2.5" y="1.4000000000000001" width="7.5" height="1.6" fill="#f4f2c0"/><g fill="#eeeaa0" stroke="#b4b450" stroke-width="0.9"><rect x="1" y="5.5" width="10.5" height="2.6" rx="1.3"/><circle cx="2.2" cy="6.8" r="1.7"/><circle cx="10.3" cy="6.8" r="1.7"/></g><rect x="2.5" y="6.0" width="7.5" height="1.6" fill="#f4f2c0"/></svg></div>
<div class="tr" style="left:52.1px;top:443.8px;color:#111">Daisy Chain Stub Length</div>
<div class="ab" style="left:46.5px;top:289px;width:120.5px;height:16px;border:1px solid #b84040"></div>
<div class="ab" style="left:179px;top:0;width:13px;height:449px;background:#f0f0f0;border-left:1px solid #e4e4e4"></div>
<div class="ab" style="left:180px;top:119.5px;width:12px;height:239px;border:1px solid #a8a8a8;border-radius:2px;background:linear-gradient(90deg,#f8f8f8,#e8e8e8 50%,#d0d0d0)"></div>
<div class="ab" style="left:184px;top:236px;width:4px;height:5px;background:repeating-linear-gradient(#707070 0 1px,transparent 1px 2px)"></div>
<svg class="ab" style="left:182px;top:4px" width="8" height="6"><path d="M1.3 4.7 L4 1.7 L6.7 4.7 Z" fill="#585858"/></svg>
<svg class="ab" style="left:182px;top:439px" width="8" height="6"><path d="M1.3 1.3 L4 4.3 L6.7 1.3 Z" fill="#585858"/></svg>
</div>
<div class="ab" style="left:215px;top:24px;width:470px;height:451px;border:1px solid #b0b0b0;background:#fff"></div>
<div class="gb" style="left:222.5px;top:32.5px;width:454px;height:37px"></div>
<div class="t" style="left:231.5px;top:45px;font-size:8.8px;letter-spacing:-0.15px;color:#a0acb8">Name</div>
<div class="inp" style="left:259px;top:43.5px;width:129px;height:16.5px"></div>
<div class="t" style="left:261.5px;top:45.5px;font-size:9px;letter-spacing:-0.22px;color:#111">HoleToHoleClearance</div>
<div class="t" style="left:397.3px;top:45px;font-size:8.5px;letter-spacing:-0.2px;color:#a0acb8">Comment</div>
<div class="inp" style="left:436.5px;top:43.5px;width:113px;height:16.5px"></div>
<div class="t" style="left:560px;top:45px;font-size:8.6px;letter-spacing:-0.2px;color:#a0acb8">Unique ID</div>
<div class="inp" style="left:600px;top:43.5px;width:67.5px;height:16.5px"></div>
<div class="t" style="left:602.3px;top:45.3px;font-size:9.2px;letter-spacing:-0.55px;color:#111">GNWFFYEG</div>
<div class="gb" style="left:222.5px;top:79.5px;width:212.5px;height:96px"></div>
<div class="gl" style="left:226.5px;top:73.5px">Where The First Object Matches</div>
<div class="rad" style="left:229px;top:89.5px"></div>
<div class="rad" style="left:229px;top:89.5px;border-color:#7c7c7c;background:linear-gradient(135deg,#e8e8e8,#b8b8b8)"></div>
<div class="ab" style="left:231px;top:91.5px;width:5px;height:5px;border-radius:50%;background:radial-gradient(circle at 35% 30%,#80b0d8 0,#2a5888 45%,#0e2440 100%)"></div>
<div class="t" style="left:241px;top:88.0px;font-size:9px;letter-spacing:-0.22px;color:#111">All</div>
<div class="rad" style="left:229px;top:103.7px"></div>
<div class="t" style="left:241px;top:102.2px;font-size:9px;letter-spacing:-0.22px;color:#111">Net</div>
<div class="rad" style="left:229px;top:117.8px"></div>
<div class="t" style="left:241px;top:116.3px;font-size:9px;letter-spacing:-0.22px;color:#111">Net Class</div>
<div class="rad" style="left:229px;top:132.0px"></div>
<div class="t" style="left:241px;top:130.5px;font-size:9px;letter-spacing:-0.22px;color:#111">Layer</div>
<div class="rad" style="left:229px;top:146.1px"></div>
<div class="t" style="left:241px;top:144.6px;font-size:9px;letter-spacing:-0.22px;color:#111">Net and Layer</div>
<div class="rad" style="left:229px;top:160.3px"></div>
<div class="t" style="left:241px;top:158.8px;font-size:9px;letter-spacing:-0.22px;color:#111">Advanced (Query)</div>
<div class="dd" style="left:310.5px;top:92.3px;width:118px;height:16.2px"></div>
<svg class="ab" style="left:418px;top:98.3px" width="7" height="4"><path d="M0.5 0.5 L3.5 3.5 L6.5 0.5 Z" fill="#9a9a9a"/></svg>
<div class="dd" style="left:310.5px;top:114.3px;width:118px;height:16.2px"></div>
<svg class="ab" style="left:418px;top:120.3px" width="7" height="4"><path d="M0.5 0.5 L3.5 3.5 L6.5 0.5 Z" fill="#9a9a9a"/></svg>
<div class="ab" style="left:327px;top:134.6px;width:101px;height:16.3px;border:1px solid #d0d0d0;border-radius:3px;background:#f4f4f4;text-align:center;font-size:9px;letter-spacing:-0.1px;line-height:14.5px;color:#b0b0b0">Query Helper ...</div>
<div class="btn" style="left:327px;top:155.2px;width:101px;height:16.3px;line-height:14.5px;letter-spacing:-0.1px">Query Builder ...</div>
<div class="gb" style="left:444px;top:79.5px;width:232px;height:96px"></div>
<div class="gl" style="left:447.5px;top:73.5px;font-size:8.9px">Full Query</div>
<div class="t" style="left:451.5px;top:88.5px;font-size:10px;font-family:'Liberation Mono',monospace;color:#303030;-webkit-text-stroke:0.45px #303030">All</div>
<div class="gb" style="left:222.5px;top:186.3px;width:212.5px;height:96px"></div>
<div class="gl" style="left:226.5px;top:180.3px">Where The Second Object Matches</div>
<div class="rad" style="left:229px;top:196.3px"></div>
<div class="rad" style="left:229px;top:196.3px;border-color:#7c7c7c;background:linear-gradient(135deg,#e8e8e8,#b8b8b8)"></div>
<div class="ab" style="left:231px;top:198.3px;width:5px;height:5px;border-radius:50%;background:radial-gradient(circle at 35% 30%,#80b0d8 0,#2a5888 45%,#0e2440 100%)"></div>
<div class="t" style="left:241px;top:194.8px;font-size:9px;letter-spacing:-0.22px;color:#111">All</div>
<div class="rad" style="left:229px;top:210.5px"></div>
<div class="t" style="left:241px;top:209.0px;font-size:9px;letter-spacing:-0.22px;color:#111">Net</div>
<div class="rad" style="left:229px;top:224.6px"></div>
<div class="t" style="left:241px;top:223.1px;font-size:9px;letter-spacing:-0.22px;color:#111">Net Class</div>
<div class="rad" style="left:229px;top:238.8px"></div>
<div class="t" style="left:241px;top:237.3px;font-size:9px;letter-spacing:-0.22px;color:#111">Layer</div>
<div class="rad" style="left:229px;top:252.9px"></div>
<div class="t" style="left:241px;top:251.4px;font-size:9px;letter-spacing:-0.22px;color:#111">Net and Layer</div>
<div class="rad" style="left:229px;top:267.1px"></div>
<div class="t" style="left:241px;top:265.6px;font-size:9px;letter-spacing:-0.22px;color:#111">Advanced (Query)</div>
<div class="dd" style="left:310.5px;top:199.1px;width:118px;height:16.2px"></div>
<svg class="ab" style="left:418px;top:205.1px" width="7" height="4"><path d="M0.5 0.5 L3.5 3.5 L6.5 0.5 Z" fill="#9a9a9a"/></svg>
<div class="dd" style="left:310.5px;top:221.1px;width:118px;height:16.2px"></div>
<svg class="ab" style="left:418px;top:227.1px" width="7" height="4"><path d="M0.5 0.5 L3.5 3.5 L6.5 0.5 Z" fill="#9a9a9a"/></svg>
<div class="ab" style="left:327px;top:241.4px;width:101px;height:16.3px;border:1px solid #d0d0d0;border-radius:3px;background:#f4f4f4;text-align:center;font-size:9px;letter-spacing:-0.1px;line-height:14.5px;color:#b0b0b0">Query Helper ...</div>
<div class="btn" style="left:327px;top:262.0px;width:101px;height:16.3px;line-height:14.5px;letter-spacing:-0.1px">Query Builder ...</div>
<div class="gb" style="left:444px;top:186.3px;width:232px;height:96px"></div>
<div class="gl" style="left:447.5px;top:180.3px;font-size:8.9px">Full Query</div>
<div class="t" style="left:451.5px;top:195.3px;font-size:10px;font-family:'Liberation Mono',monospace;color:#303030;-webkit-text-stroke:0.45px #303030">All</div>
<div class="gb" style="left:222.5px;top:292px;width:454px;height:174px"></div>
<div class="gl" style="left:227.5px;top:286.5px;font-size:8.5px;letter-spacing:-0.15px">Constraints</div>
<div class="t" style="left:306.9px;top:307px;font-size:9.45px;font-weight:bold;color:#3a3a3a">Allow Stacked Micro Vias</div>
<div class="ab" style="left:429.5px;top:307.5px;width:10.5px;height:10.5px;border:1px solid #7a8aa8;background:linear-gradient(135deg,#dfe6f5,#fafcff)"></div>
<svg class="ab" style="left:431px;top:309px" width="8" height="8"><path d="M1 4 L3 6.5 L7 1" stroke="#2a3a8a" stroke-width="1.4" fill="none"/></svg>
<div class="t" style="left:445.2px;top:307px;font-size:9.4px;font-weight:bold;color:#3a3a3a">Hole to Hole Clearance</div>
<div class="ab" style="left:549.5px;top:299px;width:35.5px;height:22px;border:1px solid #c05858"></div>
<div class="t" style="left:556.5px;top:307.5px;font-size:8.5px;letter-spacing:-0.1px;color:#2a68a0">10mil</div>
<svg class="ab" style="left:306px;top:324px" width="284.5" height="141" viewBox="306 324 284.5 141">
<rect x="306" y="324" width="284.5" height="141" fill="#26521f"/>
<circle cx="388" cy="387.3" r="11.3" fill="rgba(170,185,110,0.28)" stroke="rgba(200,225,190,0.35)" stroke-width="0.8"/><circle cx="379.4" cy="382.7" r="11.9" fill="rgba(10,30,10,0.35)"/><circle cx="379.7" cy="383" r="11.3" fill="#e2bb30"/><circle cx="378.9" cy="382.4" r="5.65" fill="#c8a22c"/><path d="M384.46 383.38 A5.65 5.65 0 0 1 380.83 387.71" stroke="#fff4c0" stroke-width="1.4" fill="none"/>
<circle cx="422.2" cy="376.1" r="11.3" fill="rgba(170,185,110,0.28)" stroke="rgba(200,225,190,0.35)" stroke-width="0.8"/><circle cx="414.0" cy="369.9" r="11.9" fill="rgba(10,30,10,0.35)"/><circle cx="414.3" cy="370.2" r="11.3" fill="#e2bb30"/><circle cx="413.5" cy="369.59999999999997" r="5.65" fill="#c8a22c"/><path d="M419.06 370.58 A5.65 5.65 0 0 1 415.43 374.91" stroke="#fff4c0" stroke-width="1.4" fill="none"/>
<circle cx="457.5" cy="361.9" r="11.4" fill="rgba(170,185,110,0.28)" stroke="rgba(200,225,190,0.35)" stroke-width="0.8"/><circle cx="449.5" cy="356.2" r="12.0" fill="rgba(10,30,10,0.35)"/><circle cx="449.8" cy="356.5" r="11.4" fill="#e2bb30"/><circle cx="449.0" cy="355.9" r="5.7" fill="#c8a22c"/><path d="M454.61 356.89 A5.70 5.70 0 0 1 450.95 361.26" stroke="#fff4c0" stroke-width="1.4" fill="none"/>
<circle cx="492.9" cy="349.3" r="11.4" fill="rgba(170,185,110,0.28)" stroke="rgba(200,225,190,0.35)" stroke-width="0.8"/><circle cx="485.0" cy="343.4" r="12.0" fill="rgba(10,30,10,0.35)"/><circle cx="485.3" cy="343.7" r="11.4" fill="#e2bb30"/><circle cx="484.5" cy="343.09999999999997" r="5.7" fill="#c8a22c"/><path d="M490.11 344.09 A5.70 5.70 0 0 1 486.45 348.46" stroke="#fff4c0" stroke-width="1.4" fill="none"/>
<circle cx="480.7" cy="441.6" r="6.9" fill="rgba(170,185,110,0.28)" stroke="rgba(200,225,190,0.35)" stroke-width="0.8"/><circle cx="472.59999999999997" cy="436.09999999999997" r="7.5" fill="rgba(10,30,10,0.35)"/><circle cx="472.9" cy="436.4" r="6.9" fill="#e2bb30"/><circle cx="472.09999999999997" cy="435.79999999999995" r="3.45" fill="#c8a22c"/><path d="M475.50 436.40 A3.45 3.45 0 0 1 473.28 439.04" stroke="#fff4c0" stroke-width="1.4" fill="none"/>
<circle cx="487" cy="467" r="12" fill="rgba(170,185,110,0.28)" stroke="rgba(200,225,190,0.35)" stroke-width="0.8"/><circle cx="478.7" cy="461.3" r="12.6" fill="rgba(10,30,10,0.35)"/><circle cx="479" cy="461.6" r="12" fill="#e2bb30"/><circle cx="478.2" cy="461.0" r="6.0" fill="#c8a22c"/><path d="M484.11 462.04 A6.00 6.00 0 0 1 480.25 466.64" stroke="#fff4c0" stroke-width="1.4" fill="none"/>
<circle cx="524" cy="455.5" r="12.1" fill="rgba(170,185,110,0.28)" stroke="rgba(200,225,190,0.35)" stroke-width="0.8"/><circle cx="515.9000000000001" cy="450.9" r="12.7" fill="rgba(10,30,10,0.35)"/><circle cx="516.2" cy="451.2" r="12.1" fill="#e2bb30"/><circle cx="515.4000000000001" cy="450.59999999999997" r="6.05" fill="#c8a22c"/><path d="M521.36 451.65 A6.05 6.05 0 0 1 517.47 456.29" stroke="#fff4c0" stroke-width="1.4" fill="none"/>
<line x1="360" y1="376" x2="376.3500203554786" y2="369.53784909759656" stroke="#c8a8e8" stroke-width="1.3"/><path d="M381.0 367.7 L377.2 371.7 L375.5 367.4 Z" fill="#c8a8e8"/>
<line x1="380.2" y1="356.5" x2="386.5" y2="381.7" stroke="#b0dcc8" stroke-width="1.3"/>
<line x1="431.2" y1="349.6" x2="412.9475286078051" y2="355.6312514165514" stroke="#c8a8e8" stroke-width="1.3"/><path d="M408.2 357.2 L412.2 353.4 L413.7 357.8 Z" fill="#c8a8e8"/>
<line x1="403.6" y1="347.9" x2="410.3" y2="372.6" stroke="#b0dcc8" stroke-width="1.3"/>
<line x1="485" y1="408.7" x2="489.1153477109067" y2="427.21906469908026" stroke="#c8a8e8" stroke-width="1.3"/><path d="M490.2 432.1 L486.9 427.7 L491.4 426.7 Z" fill="#c8a8e8"/>
<line x1="472.9" y1="440.7" x2="498.9" y2="431.6" stroke="#b0dcc8" stroke-width="1.3"/>
<line x1="476.4" y1="457.2" x2="503.2" y2="448.2" stroke="#b0dcc8" stroke-width="1.3"/>
<line x1="497.2" y1="466" x2="495.5129609692139" y2="456.91594368038244" stroke="#c8a8e8" stroke-width="1.3"/><path d="M494.6 452.0 L497.8 456.5 L493.3 457.3 Z" fill="#c8a8e8"/>
<line x1="458.1" y1="452" x2="439.38656579138365" y2="458.9575588724343" stroke="#c8a8e8" stroke-width="1.3"/><path d="M434.7 460.7 L438.6 456.8 L440.2 461.1 Z" fill="#c8a8e8"/>
<line x1="431.3" y1="450.3" x2="433.9" y2="466" stroke="#b0dcc8" stroke-width="1.3"/>
<line x1="406.4" y1="459.7" x2="407.5" y2="466" stroke="#b0dcc8" stroke-width="1.3"/>
</svg>
<div class="ab" style="left:3px;top:482.5px;width:688px;height:1px;background:#a0a0a0"></div>
<div class="ab" style="left:3px;top:483.5px;width:688px;height:1px;background:#fafafa"></div>
<div class="ab" style="left:3px;top:484px;width:688px;height:17px;background:rgba(255,255,255,0.25)"></div>
<div class="btn" style="left:91px;top:490px;width:74.5px;height:18px;border-color:#707070;font-size:9.2px;letter-spacing:-0.15px;line-height:15.5px;padding-right:7.0px">Rule Wizard</div>
<div class="btn" style="left:173px;top:490px;width:74.5px;height:18px;border-color:#707070;font-size:9.2px;letter-spacing:-0.15px;line-height:15.5px;padding-right:7.0px">Priorities</div>
<div class="btn" style="left:494.5px;top:490px;width:57.5px;height:18px;border-color:#3c7fb1;font-size:9.2px;letter-spacing:-0.15px;line-height:15.5px;padding-right:0px">OK</div>
<div class="btn" style="left:559.5px;top:490px;width:57.5px;height:18px;border-color:#707070;font-size:9.2px;letter-spacing:-0.15px;line-height:15.5px;padding-right:0px">Cancel</div>
<div class="btn" style="left:626px;top:490px;width:57.5px;height:18px;border-color:#707070;font-size:9.2px;letter-spacing:-0.15px;line-height:15.5px;padding-right:0px">Apply</div>
</div></body></html>
